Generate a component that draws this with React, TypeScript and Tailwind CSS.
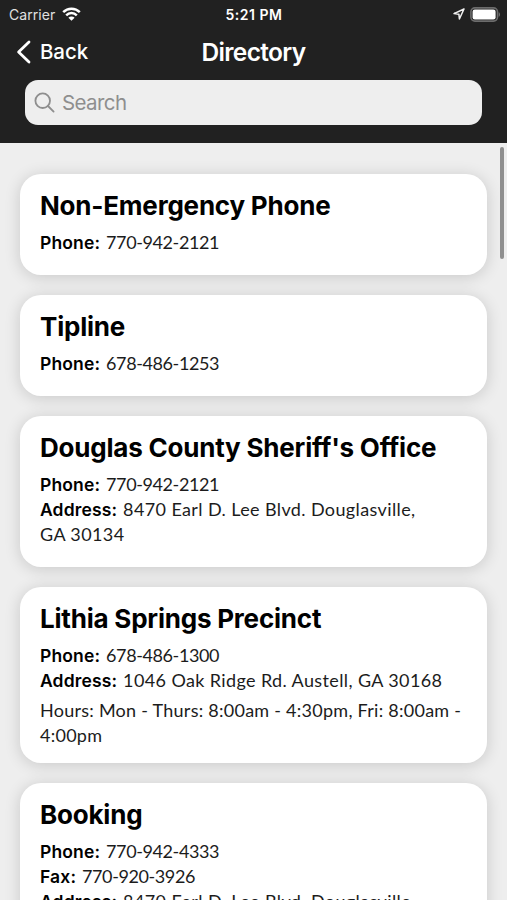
import { ReactNode } from "react";

type Field = { label: string; value: string };

type Entry = {
  name: string;
  fields: Field[];
  hours?: string;
};

// state and zip stay together when an address wraps
const entries: Entry[] = [
  {
    name: "Non-Emergency Phone",
    fields: [{ label: "Phone:", value: "770-942-2121" }],
  },
  {
    name: "Tipline",
    fields: [{ label: "Phone:", value: "678-486-1253" }],
  },
  {
    name: "Douglas County Sheriff's Office",
    fields: [
      { label: "Phone:", value: "770-942-2121" },
      { label: "Address:", value: "8470 Earl D. Lee Blvd. Douglasville, GA\u00a030134" },
    ],
  },
  {
    name: "Lithia Springs Precinct",
    fields: [
      { label: "Phone:", value: "678-486-1300" },
      { label: "Address:", value: "1046 Oak Ridge Rd. Austell, GA\u00a030168" },
    ],
    hours: "Hours: Mon - Thurs: 8:00am - 4:30pm, Fri: 8:00am - 4:00pm",
  },
  {
    name: "Booking",
    fields: [
      { label: "Phone:", value: "770-942-4333" },
      { label: "Fax:", value: "770-920-3926" },
      { label: "Address:", value: "8470 Earl D. Lee Blvd. Douglasville, GA\u00a030134" },
    ],
  },
];

function StatusBar() {
  return (
    <div className="grid h-[27px] grid-cols-3 items-center pr-[6px] pl-[9px] text-[14px] leading-[27px] text-white">
      <div className="flex items-center gap-[7px]">
        <span className="pt-px tracking-[0.05px] text-[#e0e0e0]">Carrier</span>
        <svg width="19" height="14" viewBox="0 0 19 14" fill="none" stroke="#fff" strokeWidth="2.5">
          <path d="M1.2 5.1a11.7 11.7 0 0 1 16.6 0" />
          <path d="M4.2 8.3a7.5 7.5 0 0 1 10.6 0" />
          <path d="M9.5 13.8 6.4 10.7a4.4 4.4 0 0 1 6.2 0z" fill="#fff" stroke="none" />
        </svg>
      </div>
      <span className="pt-px pr-0.5 text-center font-semibold tracking-[0.5px] whitespace-nowrap">5:21 PM</span>
      <div className="flex items-center justify-end gap-[5px]">
        <svg width="12" height="12" viewBox="0 0 12 12" fill="none" stroke="#f2f2f2" strokeWidth="1.5" strokeLinejoin="round">
          <path d="M11 1 1 5.6l4.9.6.5 4.8z" />
        </svg>
        <svg width="31" height="15" viewBox="0 0 31 15">
          <rect x="0.9" y="0.9" width="26.6" height="13.2" rx="4" fill="none" stroke="#6c6c6c" strokeWidth="1.6" />
          <rect x="2.6" y="2.6" width="23" height="9.8" rx="2.2" fill="#fff" />
          <path d="M28.7 5.2c1.8.6 1.8 4 0 4.6z" fill="#6c6c6c" />
        </svg>
      </div>
    </div>
  );
}

function Header() {
  return (
    <header className="h-[142.5px] shrink-0 bg-[#212121]">
      <StatusBar />
      <div className="grid h-[53px] grid-cols-3 items-center pb-[3px] text-white">
        <div className="flex items-center gap-[9px] pl-4">
          <svg width="15" height="24" viewBox="0 0 15 24" fill="none" stroke="#fff" strokeWidth="2.8" strokeLinecap="round" strokeLinejoin="round">
            <path d="M13 2 2.6 12 13 22" />
          </svg>
          <span className="pt-px text-[20.5px] font-medium tracking-[-0.1px]">Back</span>
        </div>
        <h1 className="text-center text-[24.5px] font-semibold tracking-[-0.65px]">Directory</h1>
      </div>
      <div className="mx-[25px] mt-[0.3px] flex h-[44.5px] items-center gap-[7px] rounded-[13px] bg-[#eee] pl-[9px] text-[#8e8e8e]">
        <svg width="21" height="21" viewBox="0 0 21 21" fill="none" stroke="currentColor" strokeWidth="1.8" strokeLinecap="round">
          <circle cx="8.7" cy="8.7" r="7.3" />
          <path d="m14 14 5.6 5.6" />
        </svg>
        <span className="pt-0.5 text-[20.5px] tracking-[-0.6px]">Search</span>
      </div>
    </header>
  );
}

function Row({ children }: { children: ReactNode }) {
  return (
    <p className="font-[Lato,sans-serif] text-[18px] leading-[25px] tracking-[0.26px] text-[#1c1c1c]">{children}</p>
  );
}

function FieldRow({ field }: { field: Field }) {
  const isNumber = field.label !== "Address:";

  return (
    <Row>
      <span className="mr-px font-[Inter,sans-serif] text-[17.5px] leading-5 font-semibold tracking-[0.15px] text-black">
        {field.label}
      </span>{" "}
      <span className={isNumber ? "tracking-[-0.4px]" : "tracking-[0.38px]"}>{field.value}</span>
    </Row>
  );
}

function DirectoryCard({ entry }: { entry: Entry }) {
  return (
    <article className="shrink-0 rounded-[21px] bg-white px-5 pt-4 pb-[15px] shadow-[0_2px_16px_rgba(0,0,0,0.16)]">
      <h2 className="text-[26px] leading-[31px] font-bold tracking-[-0.21px] whitespace-nowrap text-black">
        {entry.name}
      </h2>
      <div className="mt-[9px] mb-[5px]">
        {entry.fields.map((field) => (
          <FieldRow key={field.label} field={field} />
        ))}
      </div>
      {entry.hours && <Row>{entry.hours}</Row>}
    </article>
  );
}

export default function App() {
  return (
    <div className="flex h-[900px] w-[507px] flex-col overflow-hidden bg-[#eee] font-[Inter,sans-serif]">
      <Header />
      <main className="relative min-h-0 flex-1 overflow-hidden px-5 pt-[31.5px]">
        <div className="flex flex-col gap-5">
          {entries.map((entry) => (
            <DirectoryCard key={entry.name} entry={entry} />
          ))}
        </div>
        <div className="absolute top-1 right-[3.5px] h-[112px] w-1 rounded-full bg-[#8f8f8f]" />
      </main>
    </div>
  );
}
